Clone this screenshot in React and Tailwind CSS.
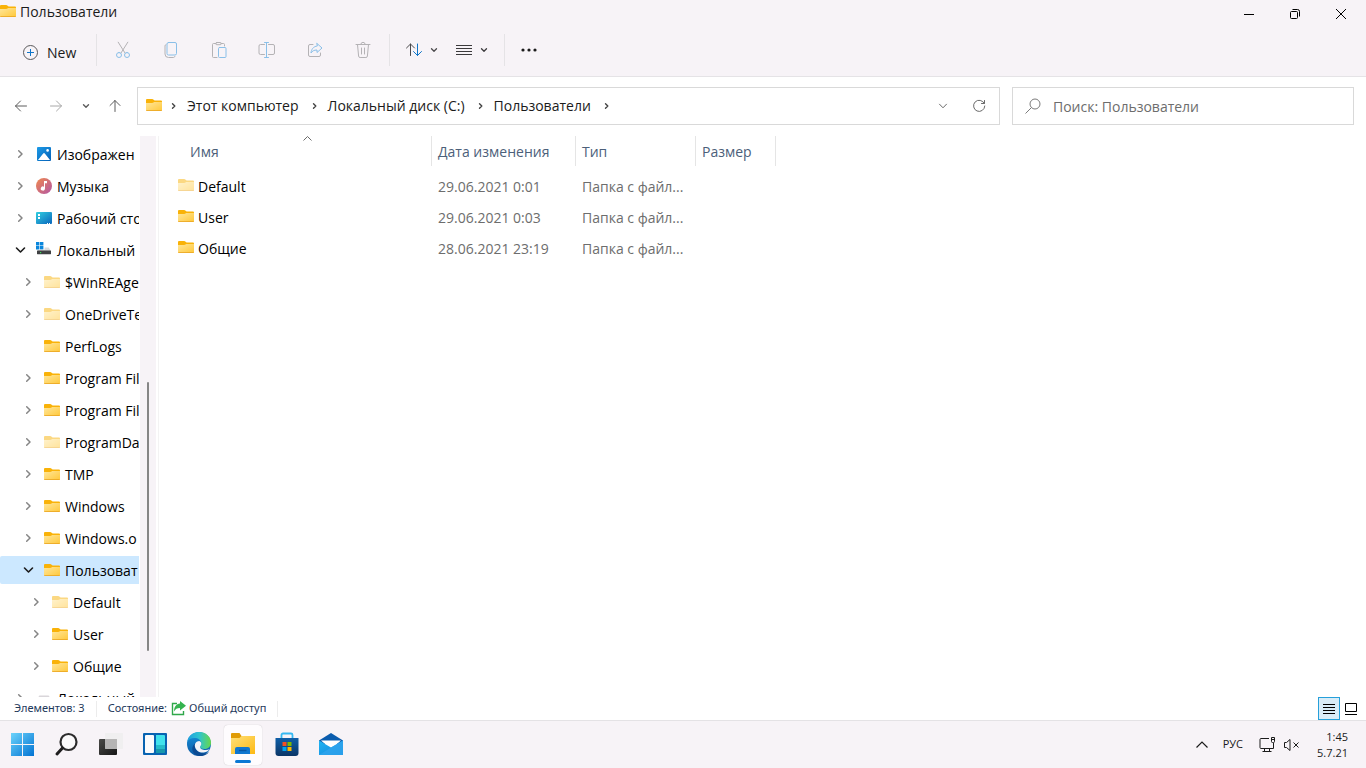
import clsx from 'clsx';

// Sidebar tree, flattened. level drives the indentation
// label is what fits in the narrow pane, title carries the full name
const treeItems = [
  { label: 'Изображен', title: 'Изображения', icon: 'pictures', level: 0, state: 'closed' },
  { label: 'Музыка', icon: 'music', level: 0, state: 'closed' },
  { label: 'Рабочий сто', title: 'Рабочий стол', icon: 'desktop', level: 0, state: 'closed' },
  { label: 'Локальный', title: 'Локальный диск (C:)', icon: 'drive', level: 0, state: 'open' },
  { label: '$WinREAge', title: '$WinREAgent', icon: 'hidden', level: 1, state: 'closed' },
  { label: 'OneDriveTe', title: 'OneDriveTemp', icon: 'hidden', level: 1, state: 'closed' },
  { label: 'PerfLogs', icon: 'folder', level: 1, state: 'leaf' },
  { label: 'Program Fil', title: 'Program Files', icon: 'folder', level: 1, state: 'closed' },
  { label: 'Program Fil', title: 'Program Files (x86)', icon: 'folder', level: 1, state: 'closed' },
  { label: 'ProgramDa', title: 'ProgramData', icon: 'hidden', level: 1, state: 'closed' },
  { label: 'TMP', icon: 'folder', level: 1, state: 'closed' },
  { label: 'Windows', icon: 'folder', level: 1, state: 'closed' },
  { label: 'Windows.o', title: 'Windows.old', icon: 'folder', level: 1, state: 'closed' },
  { label: 'Пользоват', title: 'Пользователи', icon: 'folder', level: 1, state: 'open', selected: true },
  { label: 'Default', icon: 'hidden', level: 2, state: 'closed' },
  { label: 'User', icon: 'folder', level: 2, state: 'closed' },
  { label: 'Общие', icon: 'folder', level: 2, state: 'closed' },
  { label: 'Локальный', title: 'Локальный диск (D:)', icon: 'disk', level: 0, state: 'closed' },
];

const files = [
  { name: 'Default', date: '29.06.2021 0:01', type: 'Папка с файл...', hidden: true },
  { name: 'User', date: '29.06.2021 0:03', type: 'Папка с файл...' },
  { name: 'Общие', date: '28.06.2021 23:19', type: 'Папка с файл...' },
];

const crumbs = ['Этот компьютер', 'Локальный диск (C:)', 'Пользователи'];

const indent = ['pl-3', 'pl-5', 'pl-7'];

/* ---------- small icons ---------- */

function Folder({ faded }) {
  return (
    <svg width="16" height="14" viewBox="0 0 16 14" className={clsx('shrink-0', faded && 'opacity-50')}>
      <defs>
        <linearGradient id="folderFront" x1="0" y1="0" x2="1" y2="1">
          <stop offset="0" stopColor="#ffe69a" />
          <stop offset="1" stopColor="#ffc83a" />
        </linearGradient>
      </defs>
      <path d="M0 2a1 1 0 0 1 1-1h5.2c.5 0 .8.2 1.1.5L8.6 2.5H15a1 1 0 0 1 1 1V6H0z" fill="#f9b208" />
      <path d="M0 5h6.2c.5 0 .9-.2 1.2-.5L8.3 4H16v8.2a.8.8 0 0 1-.8.8H.8a.8.8 0 0 1-.8-.8z" fill="url(#folderFront)" />
      <path d="M0 12.2c0 .4.4.8.8.8h14.4c.4 0 .8-.4.8-.8z" fill="#e9a21f" />
    </svg>
  );
}

function Pictures() {
  return (
    <svg width="16" height="16" viewBox="0 0 16 16" className="shrink-0">
      <defs>
        <linearGradient id="pic" x1="0" y1="0" x2="1" y2="1">
          <stop offset="0" stopColor="#1c9be8" />
          <stop offset="1" stopColor="#0560b6" />
        </linearGradient>
      </defs>
      <rect x="1" y="1" width="14" height="14" rx="1" fill="url(#pic)" />
      <path d="M2 14 7.2 7.6a1 1 0 0 1 1.6 0L14 14z" fill="#fff" />
      <circle cx="11.6" cy="4.4" r="1.3" fill="#fff" />
    </svg>
  );
}

function Music() {
  return (
    <svg width="16" height="16" viewBox="0 0 16 16" className="shrink-0">
      <defs>
        <linearGradient id="mus" x1="0" y1="0" x2="1" y2="1">
          <stop offset="0" stopColor="#f0884c" />
          <stop offset="1" stopColor="#b256a6" />
        </linearGradient>
      </defs>
      <circle cx="8" cy="8" r="8" fill="url(#mus)" />
      <path d="M8 3h3v2.2H9v5.3A2.1 2.1 0 1 1 8 8.7z" fill="#fff" />
    </svg>
  );
}

function Desktop() {
  return (
    <svg width="16" height="16" viewBox="0 0 16 16" className="shrink-0">
      <defs>
        <linearGradient id="desk" x1="0" y1="0" x2="1" y2="1">
          <stop offset="0" stopColor="#32cfe0" />
          <stop offset="1" stopColor="#0a66bd" />
        </linearGradient>
      </defs>
      <rect y="2" width="16" height="12" rx="1" fill="url(#desk)" />
      <path d="M2 4h2v2H2zM2 7h2v2H2z" fill="#fff" />
      <path d="M11 13h1v1h-1zM13 13h1v1h-1z" fill="#fff" />
    </svg>
  );
}

function Drive() {
  return (
    <svg width="16" height="16" viewBox="0 0 16 16" className="shrink-0">
      <path d="M0 0h3.4v3.4H0zM4 0h3.4v3.4H4zM0 4h3.4v3.4H0zM4 4h3.4v3.4H4z" fill="#0a86dc" />
      <path d="M8.5 5.5h4.2L15 9H1.6l.8-1.2h6.1z" fill="#d9d9d9" />
      <rect x="1" y="8.6" width="14" height="3.6" rx=".4" fill="#3f4143" />
      <rect x="4" y="10" width="1.2" height="1.2" fill="#3ddc5c" />
    </svg>
  );
}

function Disk() {
  return (
    <svg width="16" height="16" viewBox="0 0 16 16" className="shrink-0">
      <path d="M3.4 5.5h9.2L15 9H1z" fill="#d9d6da" />
      <rect x="1" y="9" width="14" height="3.6" fill="#3f4143" />
    </svg>
  );
}

const treeIcons = {
  folder: <Folder />,
  hidden: <Folder faded />,
  pictures: <Pictures />,
  music: <Music />,
  desktop: <Desktop />,
  drive: <Drive />,
  disk: <Disk />,
};

function Line({ d, className, width = 1 }) {
  return (
    <svg
      width="16"
      height="16"
      viewBox="0 0 16 16"
      fill="none"
      stroke="currentColor"
      strokeWidth={width}
      strokeLinecap="round"
      strokeLinejoin="round"
      className={clsx('shrink-0', className)}
    >
      <path d={d} />
    </svg>
  );
}

const RIGHT = 'M6.500 5.700 8.800 8 6.500 10.300';
const DOWN = 'M5.500 6.700 8 9.200l2.500-2.500';

// Grey outline with a blue accent, the way disabled commands look
function Command({ grey, blue, label }) {
  return (
    <button type="button" aria-label={label} className="flex h-8 w-12 items-center justify-center">
      <svg width="18" height="18" viewBox="0 0 18 18" fill="none" strokeLinecap="round" strokeLinejoin="round">
        <path d={grey} stroke="#b4b2b5" />
        <path d={blue} stroke="#8abfe8" />
      </svg>
    </button>
  );
}

const commands = [
  {
    label: 'Вырезать',
    grey: 'M4.2 1.2 11 12M13.8 1.2 7 12',
    blue: 'M5 11.5a2.5 2.5 0 1 1 0 5 2.5 2.5 0 0 1 0-5zM13 11.5a2.5 2.5 0 1 1 0 5 2.5 2.5 0 0 1 0-5z',
  },
  {
    label: 'Копировать',
    grey: 'M4 3.500a1.500 1.500 0 0 0-1 1.400V13a3.500 3.500 0 0 0 3.500 3.500h5a1.500 1.500 0 0 0 1.400-1',
    blue: 'M6.500 1.500H13A1.500 1.500 0 0 1 14.500 3v9.500A1.500 1.500 0 0 1 13 14H6.500A1.500 1.500 0 0 1 5 12.500V3a1.500 1.500 0 0 1 1.500-1.500z',
  },
  {
    label: 'Вставить',
    grey: 'M6 2.500H3.500a1 1 0 0 0-1 1v12a1 1 0 0 0 1 1H7M11 2.500h2.500a1 1 0 0 1 1 1V5M6.800 1.500h3.400a1 1 0 0 1 0 2.200H6.800a1 1 0 0 1 0-2.200z',
    blue: 'M9.500 6.500h5.500a1 1 0 0 1 1 1v8a1 1 0 0 1-1 1H9.500a1 1 0 0 1-1-1v-8a1 1 0 0 1 1-1z',
  },
  {
    label: 'Переименовать',
    grey: 'M6.500 3.500h-4A1.500 1.500 0 0 0 1 5v7a1.500 1.500 0 0 0 1.500 1.500h4M10.500 3.500H15A1.500 1.500 0 0 1 16.500 5v7a1.500 1.500 0 0 1-1.500 1.500h-4.500',
    blue: 'M8.500 1.500v15M6.500 1.500h4M6.500 16.500h4',
  },
  {
    label: 'Поделиться',
    grey: 'M7 3.500H4A1.500 1.500 0 0 0 2.500 5v9A1.500 1.500 0 0 0 4 15.500h9a1.500 1.500 0 0 0 1.500-1.500v-2',
    blue: 'M11 2.500 16 7l-5 4.500V9c-3 0-4.800 1-6 3 .300-3.500 2.200-6.500 6-7z',
  },
  {
    label: 'Удалить',
    grey: 'M2 3.500h14M6.800 3.500a2.200 2.200 0 0 1 4.400 0M3.500 3.500l1.100 11.600a1.500 1.500 0 0 0 1.500 1.400h5.800a1.500 1.500 0 0 0 1.500-1.400L14.500 3.500M7.500 7v6M10.500 7v6',
    blue: '',
  },
];

/* ---------- window parts ---------- */

function TitleBar() {
  return (
    <div className="flex h-7 items-start justify-between">
      <div className="flex h-6 items-center gap-1">
        <span className="pb-0.5"><Folder /></span>
        <h1 className="text-[14px] leading-6 text-[#1b1b1b]">Пользователи</h1>
      </div>
      <div className="flex pr-0.5 text-black">
        <button type="button" aria-label="Свернуть" className="flex h-7 w-[46px] items-center justify-center">
          <svg width="10" height="10" viewBox="0 0 10 10"><path d="M0 5.500h10" stroke="currentColor" /></svg>
        </button>
        <button type="button" aria-label="Восстановить" className="flex h-7 w-[46px] items-center justify-center">
          <svg width="10" height="10" viewBox="0 0 10 10" fill="none" stroke="currentColor">
            <rect x=".5" y="2.500" width="7" height="7" rx="1" />
            <path d="M2.500.5H7.500a2 2 0 0 1 2 2v5" />
          </svg>
        </button>
        <button type="button" aria-label="Закрыть" className="flex h-7 w-[46px] items-center justify-center">
          <svg width="10" height="10" viewBox="0 0 10 10"><path d="m0 0 10 10M10 0 0 10" stroke="currentColor" /></svg>
        </button>
      </div>
    </div>
  );
}

function Toolbar() {
  return (
    <div className="flex h-[49px] items-start border-b border-[#e5e3e6]">
      <button type="button" className="flex h-12 w-24 items-center gap-2 pl-[22px] text-[14px] text-[#1b1b1b]">
        <svg width="17" height="17" viewBox="0 0 17 17" fill="none">
          <circle cx="8.500" cy="8.500" r="7" stroke="#5a595b" />
          <path d="M8.500 5v7M5 8.500h7" stroke="#0f75c8" />
        </svg>
        New
      </button>
      <div className="flex h-11 items-center">
        <div className="mr-0.5 h-8 w-px bg-[#e5e3e6]" />
        {commands.map((c) => (
          <Command key={c.label} {...c} />
        ))}
        <div className="ml-0.5 h-8 w-px bg-[#e5e3e6]" />
        <button type="button" aria-label="Сортировать" className="ml-[15px] flex h-8 items-center gap-[3px] text-[#4a494b]">
          <svg width="18" height="16" viewBox="0 0 18 16" fill="none" strokeLinecap="round" strokeLinejoin="round">
            <path d="M5.500 13.500V2M1.500 6l4-4 4 4" stroke="#4a494b" />
            <path d="M12.500 2v11.500M8.500 9.500l4 4 4-4" stroke="#0f75c8" />
          </svg>
          <Line d={DOWN} width={1.300} />
        </button>
        <button type="button" aria-label="Просмотреть" className="ml-[13px] flex h-8 items-center gap-[3px] text-[#3b3a3c]">
          <svg width="18" height="16" viewBox="0 0 18 16" stroke="currentColor">
            <path d="M1 3.500h16M1 6.500h16M1 9.500h16M1 12.500h16" />
          </svg>
          <Line d={DOWN} width={1.300} />
        </button>
        <div className="ml-3 h-8 w-px bg-[#e5e3e6]" />
        <button type="button" aria-label="Подробнее" className="flex h-8 w-12 items-center justify-center">
          <svg width="18" height="4" viewBox="0 0 18 4" fill="#1b1b1b">
            <circle cx="3" cy="2" r="1.600" />
            <circle cx="9" cy="2" r="1.600" />
            <circle cx="15" cy="2" r="1.600" />
          </svg>
        </button>
      </div>
    </div>
  );
}

function AddressRow() {
  return (
    <div className="flex items-center gap-3 pt-2.5 pr-3 pb-[11px] pl-3">
      <div className="flex flex-1 items-center">
        <div className="flex w-[125px] items-center pl-px text-[#5c5c5c]">
          <button type="button" aria-label="Назад">
            <Line d="M13.500 8h-11M7.500 3 2.500 8l5 5" />
          </button>
          <button type="button" aria-label="Вперёд" className="ml-[19px] text-[#a8a8a8]">
            <Line d="M2.500 8h11M8.500 3l5 5-5 5" />
          </button>
          <button type="button" aria-label="Последние расположения" className="ml-3.5">
            <Line d={DOWN} width={1.400} />
          </button>
          <button type="button" aria-label="Вверх" className="ml-[13px]">
            <Line d="M8 13.500v-11M3 7.500l5-5 5 5" />
          </button>
        </div>
        <nav aria-label="Адрес" className="flex h-[38px] flex-1 items-center border border-[#d9d9d9] bg-white pl-2">
          <span className="pb-0.5"><Folder /></span>
          <ol className="flex flex-1 items-center pl-1 text-[14px] text-[#1b1b1b]">
            <li className="flex">
              <Line d={RIGHT} className="text-[#444]" width={1.400} />
            </li>
            {crumbs.map((c) => (
              <li key={c} className="flex items-center gap-1 pl-px">
                <a href="#" className="px-1 leading-5">{c}</a>
                <Line d={RIGHT} className="text-[#444]" width={1.400} />
              </li>
            ))}
          </ol>
          <button type="button" aria-label="Журнал адресов" className="flex w-8 justify-center text-[#6b6b6b]">
            <Line d="M4.500 6.200 8 9.800l3.500-3.600" />
          </button>
          <button type="button" aria-label="Обновить" className="mx-1 flex w-8 justify-center text-[#6b6b6b]">
            <Line d="M13.300 5.500A5.600 5.600 0 1 0 13.800 8M13.500 2.500v3h-3" />
          </button>
        </nav>
      </div>
      <label className="flex h-[38px] w-[342px] items-center border border-[#d9d9d9] bg-white pl-3">
        <svg width="16" height="16" viewBox="0 0 16 16" fill="none" stroke="#7a7a7a" className="shrink-0">
          <circle cx="10" cy="6" r="5" />
          <path d="M6.500 9.500.5 15.500" />
        </svg>
        <input
          type="text"
          aria-label="Поиск"
          placeholder="Поиск: Пользователи"
          className="w-full min-w-0 flex-1 bg-transparent pl-3 text-[14px] outline-none placeholder:text-[#6d6d6d]"
        />
      </label>
    </div>
  );
}

function Sidebar() {
  return (
    <aside className="flex w-[159px] shrink-0 border-r border-[#f3f3f3]">
      <ul className="flex min-h-0 w-[139px] flex-col gap-1 overflow-hidden pt-1">
        {treeItems.map((item, i) => (
          <li key={i} className="shrink-0">
            <button
              type="button"
              title={item.title}
              className={clsx(
                'flex h-7 w-full items-center overflow-hidden rounded-l-xs text-[14px] text-black',
                indent[item.level],
                item.selected && 'bg-[#cce8ff]'
              )}
            >
              <span className="mr-2 flex w-4 shrink-0">
                {item.state === 'closed' && <Line d="M6.700 4.700 10 8l-3.300 3.300" className="text-[#858585]" width={1.500} />}
                {item.state === 'open' && <Line d="M4.500 6 8.500 10l4-4" className="text-[#1b1b1b]" width={1.600} />}
              </span>
              {treeIcons[item.icon]}
              <span className="pt-px pl-[5px] leading-6 whitespace-nowrap">{item.label}</span>
            </button>
          </li>
        ))}
      </ul>
      <div className="ml-px flex w-4 flex-col items-center bg-[#f7f3f7]">
        <div className="flex-[246]" />
        <div className="w-0.5 flex-[269] rounded-full bg-[#868686]" />
        <div className="flex-[46]" />
      </div>
    </aside>
  );
}

function FileList() {
  return (
    <main className="min-w-0 flex-1 overflow-hidden">
      <table className="w-[617px] table-fixed text-left text-[14px]">
        <colgroup>
          <col className="w-[273px]" />
          <col className="w-[144px]" />
          <col className="w-[120px]" />
          <col className="w-[80px]" />
        </colgroup>
        <thead className="text-[#4c607a]">
          <tr>
            <th scope="col" aria-sort="ascending" className="p-0 pb-[5px] font-normal">
              <div className="relative flex h-[30px] items-center border-r border-[#e5e5e5] pl-[31px]">
                Имя
                <svg width="9" height="5" viewBox="0 0 9 5" fill="none" stroke="#6b6b6b" className="absolute top-0 left-36">
                  <path d="M.5 4.500l4-4 4 4" />
                </svg>
              </div>
            </th>
            {['Дата изменения', 'Тип', 'Размер'].map((h) => (
              <th key={h} scope="col" className="p-0 pb-[5px] font-normal">
                <div className="flex h-[30px] items-center border-r border-[#e5e5e5] pl-1.5">{h}</div>
              </th>
            ))}
          </tr>
        </thead>
        <tbody className="text-[#6d6d6d]">
          {files.map((f) => (
            <tr key={f.name} className="h-[31px]">
              <td className="p-0 pl-[19px] text-black">
                <span className="flex items-center gap-1">
                  <span className="pb-1"><Folder faded={f.hidden} /></span>
                  {f.name}
                </span>
              </td>
              <td className="p-0 pl-1.5">{f.date}</td>
              <td className="p-0 pl-1.5">{f.type}</td>
              <td className="p-0" />
            </tr>
          ))}
        </tbody>
      </table>
    </main>
  );
}

function StatusBar() {
  return (
    <div className="flex h-[23px] shrink-0 items-center pr-1 pl-3.5 font-['Noto_Sans',sans-serif] text-[11px] text-[#1e395b]">
      <span>Элементов: 3</span>
      <div className="mx-[11px] h-4 w-px bg-[#ececec]" />
      <span>Состояние:</span>
      <svg width="15" height="15" viewBox="0 0 15 15" className="mr-[3px] ml-1">
        <path d="M6 2.500H1.500v11h11V10" fill="none" stroke="#2fa84a" strokeWidth="1.400" />
        <path d="M9 0l6 4.800-6 4.700V7C6 7 4.500 8 3 10.500 3.200 6 5 3 9 2.600z" fill="#35b34f" />
      </svg>
      <span>Общий доступ</span>
      <div className="mx-[11px] h-4 w-px bg-[#ececec]" />
      <div className="ml-auto flex h-full">
        <button type="button" aria-label="Таблица" className="flex w-[22px] items-center justify-center border border-[#26a0da] bg-[#d9ecf7]">
          <svg width="12" height="11" viewBox="0 0 12 11" stroke="#000"><path d="M0 1.500h12M0 4.500h12M0 7.500h12M0 10.500h12" /></svg>
        </button>
        <button type="button" aria-label="Крупные значки" className="flex w-[22px] items-center justify-center">
          <svg width="12" height="12" viewBox="0 0 12 12" fill="none" stroke="#000"><path d="M.5.5h11v8H.5zM0 11.500h12" /></svg>
        </button>
      </div>
    </div>
  );
}

/* ---------- taskbar ---------- */

function Gradients() {
  return (
    <svg width="0" height="0" className="absolute">
      <defs>
        <linearGradient id="win" x1="0" y1="0" x2="1" y2="1">
          <stop offset="0" stopColor="#6cd3fb" />
          <stop offset="1" stopColor="#0273d3" />
        </linearGradient>
        <linearGradient id="taskDark" x1="0" y1="0" x2="1" y2="1">
          <stop offset="0" stopColor="#4a4a48" />
          <stop offset="1" stopColor="#161616" />
        </linearGradient>
        <linearGradient id="edgeTop" x1="0" y1="0" x2="1" y2="0">
          <stop offset="0" stopColor="#1f9fe0" />
          <stop offset=".5" stopColor="#2fc4cf" />
          <stop offset="1" stopColor="#68d84a" />
        </linearGradient>
        <linearGradient id="edgeLow" x1="0" y1="0" x2="0" y2="1">
          <stop offset="0" stopColor="#1793dd" />
          <stop offset="1" stopColor="#0c59a4" />
        </linearGradient>
        <linearGradient id="bigFolder" x1="0" y1="0" x2="1" y2="1">
          <stop offset="0" stopColor="#ffe07a" />
          <stop offset="1" stopColor="#fdb913" />
        </linearGradient>
        <linearGradient id="store" x1="0" y1="0" x2="0" y2="1">
          <stop offset="0" stopColor="#0f5fa8" />
          <stop offset="1" stopColor="#0b3566" />
        </linearGradient>
        <linearGradient id="mail" x1="0" y1="0" x2="1" y2="1">
          <stop offset="0" stopColor="#1fb5f2" />
          <stop offset="1" stopColor="#1583dc" />
        </linearGradient>
      </defs>
    </svg>
  );
}

const apps = [
  {
    label: 'Пуск',
    art: <path d="M1 1h11v11H1zM13 1h11v11H13zM1 13h11v11H1zM13 13h11v11H13z" fill="url(#win)" />,
  },
  {
    label: 'Поиск',
    art: (
      <>
        <circle cx="14.500" cy="10" r="8" fill="#fbfafb" stroke="#2c2b2c" strokeWidth="2.200" />
        <path d="m8.500 16-5.500 6" stroke="#1f1e1f" strokeWidth="3" strokeLinecap="round" />
      </>
    ),
  },
  {
    label: 'Представление задач',
    art: (
      <>
        <rect x="1" y="7" width="18" height="16" rx="1" fill="url(#taskDark)" />
        <rect x="7" y="1" width="18" height="16" rx="1" fill="#efeeef" fillOpacity=".88" />
        <rect x="7" y="7" width="12" height="10" fill="#a9a8a8" fillOpacity=".75" />
      </>
    ),
  },
  {
    label: 'Виджеты',
    art: (
      <>
        <rect x="1" y="1" width="24" height="22" rx="1" fill="#0863b1" />
        <rect x="3" y="3" width="9" height="18" rx="1" fill="#fbfbfc" />
        <path d="M14 3h8a1 1 0 0 1 1 1v9h-9z" fill="#41e2ec" />
        <path d="M14 13h9v4h-9z" fill="#25bcc9" />
        <path d="M14 17h9v3a1 1 0 0 1-1 1h-8z" fill="#1798ad" />
      </>
    ),
  },
  {
    label: 'Microsoft Edge',
    art: (
      <>
        <circle cx="13" cy="12" r="12" fill="url(#edgeLow)" />
        <path d="M1.200 10C2 4 7 0 13 0c7 0 12 5 12 10.500 0 4-3 6.500-6.500 6.500-2.500 0-4.500-.8-4.500-2 0-.8 1.300-1.200 1.300-3.500C15.300 8 12 6 8.500 6 5 6 2.500 7.500 1.200 10z" fill="url(#edgeTop)" />
        <path d="M9 11.500c-1 6 4 10.500 10 10 1.800-.2 3-.8 4.200-1.600C20.500 23 17 24 13.500 24 7 23.500 3.500 16 9 11.500z" fill="#0b4a92" />
        <path d="M14 15c0-.8 1.300-1.200 1.300-3.500 0-1.300-.8-2.200-2-2.600-3 .2-4.900 2.600-4.400 5.600.7 4.200 5 6.500 9 6 2.500-.3 4.300-1.500 5.600-3.200-1.300.7-3.300 1-5.300.7-2.500-.4-4.200-1.500-4.200-3z" fill="#f4f3f7" />
      </>
    ),
  },
  {
    label: 'Проводник',
    active: true,
    art: (
      <>
        <path d="M1 2a1 1 0 0 1 1-1h7.500l2 3H24a1 1 0 0 1 1 1v4H1z" fill="#e09b06" />
        <path d="M1 6h8.500l2-2H24a1 1 0 0 1 1 1v17H1z" fill="url(#bigFolder)" />
        <path d="M5 22v-5a2 2 0 0 1 2-2h11a2 2 0 0 1 2 2v5z" fill="#1177cf" />
        <path d="M9 18.500h7.500" stroke="#0a58a3" strokeWidth="1.400" />
      </>
    ),
  },
  {
    label: 'Microsoft Store',
    art: (
      <>
        <path d="M7.500 7V3a1.500 1.500 0 0 1 1.500-1.500h8A1.500 1.500 0 0 1 18.500 3v4" fill="none" stroke="#35b8f1" strokeWidth="1.800" />
        <path d="M1.500 6h23v15a3 3 0 0 1-3 3h-17a3 3 0 0 1-3-3z" fill="url(#store)" />
        <path d="M8.500 10h4v4h-4z" fill="#f25022" />
        <path d="M13.500 10h4v4h-4z" fill="#7fba00" />
        <path d="M8.500 15h4v4h-4z" fill="#00a4ef" />
        <path d="M13.500 15h4v4h-4z" fill="#ffb900" />
      </>
    ),
  },
  {
    label: 'Почта',
    art: (
      <>
        <path d="M1 8.500 13 1l12 7.500V12H1z" fill="#0b5cad" />
        <path d="M3 8.500h20L13 17z" fill="#fff" />
        <path d="M1 8.500 13 15.500 25 8.500V23H1z" fill="url(#mail)" />
        <path d="M1 23 13 15.500 25 8.500V23z" fill="#2fa5ee" fillOpacity=".8" />
      </>
    ),
  },
];

function Taskbar() {
  return (
    <footer className="flex h-12 shrink-0 items-center justify-between border-t border-[#e4e2e5] bg-[#f7f3f7] pr-4">
      <Gradients />
      <div className="flex items-center pl-px">
        {apps.map((app) => (
          <button key={app.label} type="button" aria-label={app.label} className="flex h-10 w-11 justify-center">
            <span
              className={clsx(
                'relative flex h-10 w-[38px] items-center justify-center rounded',
                app.active && 'bg-[#fefcfe] shadow-[0_0_1px_#bbb]'
              )}
            >
              <svg width="26" height="25" viewBox="0 0 26 25">{app.art}</svg>
              {app.active && <span className="absolute bottom-0.5 h-[3px] w-4 rounded-full bg-[#0a78d4]" />}
            </span>
          </button>
        ))}
      </div>
      <div className="flex items-center text-[11px] text-[#1b1b1b]">
        <button type="button" aria-label="Скрытые значки" className="mr-[15px]">
          <svg width="12" height="7" viewBox="0 0 12 7" fill="none" stroke="#1b1b1b" strokeWidth="1.200" className="block">
            <path d="m.5 6.500 5.500-5.500 5.500 5.500" />
          </svg>
        </button>
        <button type="button" className="mr-4">РУС</button>
        <button type="button" aria-label="Сеть и звук" className="mr-3.5 flex items-center gap-[7px]">
          <svg width="17" height="17" viewBox="0 0 17 17" fill="none" stroke="#1b1b1b">
            <path d="M10 2.500H2a1 1 0 0 0-1 1v8a1 1 0 0 0 1 1h12.500V7M5.500 12.500v3M10.500 12.500v3M3.500 15.500h9" />
            <path d="M12.500 1.500h3v4a1 1 0 0 1-1 1h-1a1 1 0 0 1-1-1zM12.500 3.500h3M14.500 7v5" />
          </svg>
          <svg width="17" height="14" viewBox="0 0 17 14" fill="none" stroke="#1b1b1b" strokeLinejoin="round">
            <path d="M1.500 4.500h2L7 1.500v11L3.500 9.500h-2z" />
            <path d="m10.500 4.500 5 5M15.500 4.500l-5 5" />
          </svg>
        </button>
        <button type="button" className="w-9 pr-0.5 text-right leading-4">
          1:45
          <br />
          5.7.21
        </button>
      </div>
    </footer>
  );
}

export default function App() {
  return (
    <div className="flex h-screen flex-col bg-white font-['Open_Sans','Noto_Sans',sans-serif]">
      <header className="shrink-0">
        <div className="bg-[#f7f3f7]">
          <TitleBar />
          <Toolbar />
        </div>
        <AddressRow />
      </header>
      <div className="flex min-h-0 flex-1">
        <Sidebar />
        <FileList />
      </div>
      <StatusBar />
      <Taskbar />
    </div>
  );
}
